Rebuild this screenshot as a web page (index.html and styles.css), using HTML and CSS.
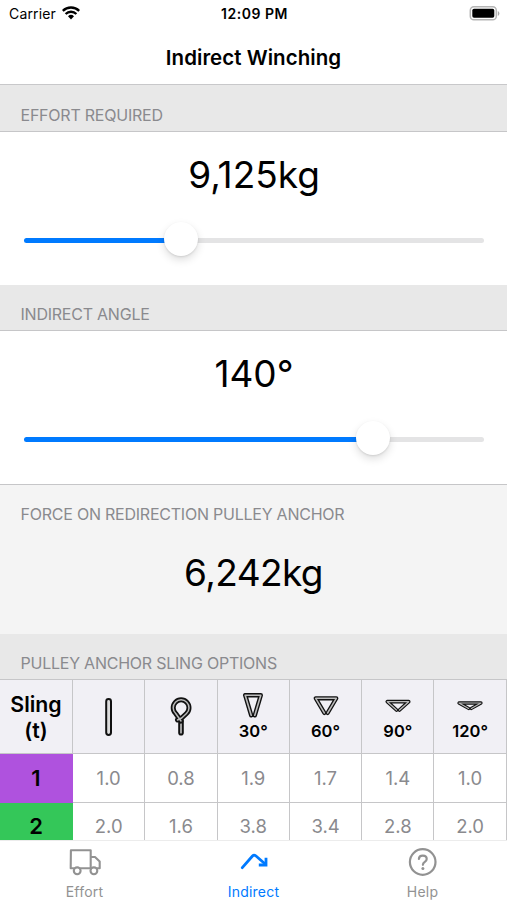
FILE: index.html
```html
<!DOCTYPE html>
<html lang="en">
<head>
<meta charset="utf-8">
<title>Indirect Winching</title>
<link rel="stylesheet" href="styles.css">
</head>
<body>
<div class="app">
  <header class="status">
    <div class="carrier"><span>Carrier</span>
      <svg width="18" height="14" viewBox="0 0 18 14"><g fill="none" stroke="#000" stroke-width="2.3"><path d="M.8 4.9A11.6 11.6 0 0 1 17.2 4.9"/><path d="M3.6 8A7.6 7.6 0 0 1 14.4 8"/></g><path d="M6 10.3A4.3 4.3 0 0 1 12 10.3L9 13.4Z"/></svg>
    </div>
    <time class="clock">12:09 PM</time>
    <svg class="battery" width="31" height="15" viewBox="0 0 31 15"><rect x="1.3" y=".8" width="26" height="13" rx="3.6" fill="#fff" stroke="#b5b5b5" stroke-width="1.5"/><rect x="3.3" y="2.8" width="22" height="9" rx="1.7"/><path d="M28.8 5v5q1.6-.8 1.6-2.5T28.8 5Z" fill="#aaa"/></svg>
  </header>
  <h1 class="title"><span>Indirect Winching</span></h1>
  <main class="content">
    <h2 class="section">EFFORT REQUIRED</h2>
    <section class="panel">
      <div class="value">9,125kg</div>
      <div class="slider"><div class="fill" style="width:157px"></div><div class="thumb"></div><div class="rest"></div></div>
    </section>
    <h2 class="section">INDIRECT ANGLE</h2>
    <section class="panel">
      <div class="value">140°</div>
      <div class="slider"><div class="fill" style="width:349px"></div><div class="thumb"></div><div class="rest"></div></div>
    </section>
    <section class="force">
      <h2 class="label">FORCE ON REDIRECTION PULLEY ANCHOR</h2>
      <div class="value result">6,242kg</div>
    </section>
    <h2 class="section">PULLEY ANCHOR SLING OPTIONS</h2>
    <div class="grid">
      <div class="cell head sling">Sling<br>(t)</div>
      <div class="cell head"><svg width="10" height="40" viewBox="0 0 10 40"><rect x="2.2" y="2" width="4.8" height="36" rx="2.4" fill="#ddd" stroke="#111" stroke-width="2"/></svg></div>
      <div class="cell head"><svg width="24" height="40" viewBox="0 0 24 40"><g fill="none" stroke-linecap="round" stroke-linejoin="round"><path d="M12 35.7V24" stroke="#111" stroke-width="5.6"/><path d="M12 35.7V24" stroke="#bbb" stroke-width="1.7"/><path d="M12 24L6.7 16.5A7.9 7.9 0 1 1 17.5 16.5L12.7 21L8.5 23" stroke="#111" stroke-width="5"/><path d="M12 24L6.7 16.5A7.9 7.9 0 1 1 17.5 16.5L12.7 21L8.5 23" stroke="#bbb" stroke-width="1.5"/></g></svg></div>
      <div class="cell head angle"><svg width="26" height="27" viewBox="0 0 26 27"><g fill="none" stroke-linejoin="round" stroke-linecap="round"><path d="M11.2 23.3L5.2 3.2H20.8L14.8 23.3" stroke="#111" stroke-width="4.4"/><path d="M11.2 23.3L5.2 3.2H20.8L14.8 23.3" stroke="#bbb" stroke-width="1.6"/></g></svg><b>30°</b></div>
      <div class="cell head angle"><svg width="28" height="27" viewBox="0 0 28 27"><g fill="none" stroke-linejoin="round" stroke-linecap="round"><path d="M12.4 21L3.7 6.3H24.3L15.6 21" stroke="#111" stroke-width="4.2"/><path d="M12.4 21L3.7 6.3H24.3L15.6 21" stroke="#bbb" stroke-width="1.5"/></g></svg><b>60°</b></div>
      <div class="cell head angle"><svg width="28" height="27" viewBox="0 0 28 27"><g fill="none" stroke-linejoin="round" stroke-linecap="round"><path d="M12.5 18L3.3 9.7H24.7L15.5 18" stroke="#111" stroke-width="3.7"/><path d="M12.5 18L3.3 9.7H24.7L15.5 18" stroke="#bbb" stroke-width="1.3"/></g></svg><b>90°</b></div>
      <div class="cell head angle"><svg width="28" height="27" viewBox="0 0 28 27"><g fill="none" stroke-linejoin="round" stroke-linecap="round"><path d="M12.6 16.4L3 11H25L15.4 16.4" stroke="#111" stroke-width="3.3"/><path d="M12.6 16.4L3 11H25L15.4 16.4" stroke="#bbb" stroke-width="1.2"/></g></svg><b>120°</b></div>
      <div class="cell size purple">1</div><div class="cell">1.0</div><div class="cell">0.8</div><div class="cell">1.9</div><div class="cell">1.7</div><div class="cell">1.4</div><div class="cell">1.0</div>
      <div class="cell size green">2</div><div class="cell">2.0</div><div class="cell">1.6</div><div class="cell">3.8</div><div class="cell">3.4</div><div class="cell">2.8</div><div class="cell">2.0</div>
    </div>
  </main>
  <nav class="tabs">
    <a class="tab"><svg width="32" height="28" viewBox="0 0 32 28"><g fill="none" stroke="#929292" stroke-width="2.1" stroke-linejoin="round"><path d="M1.9 2.2H21.7V20.2H1.7ZM21.7 9H26L30.7 13.5V20.2H21.7"/><g fill="#fff"><circle cx="8.2" cy="22.8" r="3.4"/><circle cx="24.9" cy="22.8" r="3.4"/></g></g></svg><span>Effort</span></a>
    <a class="tab active"><svg width="32" height="28" viewBox="0 0 32 28"><g fill="none" stroke="#007aff" stroke-width="2.8" stroke-linecap="round" stroke-linejoin="round"><path d="M4.3 19.7L14.5 8Q16 6.4 17.7 7.8L27.5 16.3"/><path d="M28 9.7V17H20.8" stroke-linecap="butt" stroke-linejoin="miter"/></g></svg><span>Indirect</span></a>
    <a class="tab"><svg width="32" height="28" viewBox="0 0 32 28"><g fill="none" stroke="#929292" stroke-width="2.2" stroke-linecap="round"><circle cx="15.7" cy="14" r="12.8"/><path d="M11.9 11C12.1 6.5 19.7 6.7 19.7 11C19.7 14 15.9 13.8 15.9 16.8"/></g><circle cx="15.9" cy="20.5" r="1.5" fill="#929292"/></svg><span>Help</span></a>
  </nav>
</div>
</body>
</html>
```
FILE: styles.css
```css
* { box-sizing: border-box; }
body { margin: 0; background: #fff; color: #000; font-family: Inter, "Liberation Sans", sans-serif; }
svg { display: block; flex: none; }
.app { width: 507px; height: 900px; display: flex; flex-direction: column; overflow: hidden; }
.status { height: 28px; display: grid; grid-template-columns: 1fr auto 1fr; align-items: center; padding: 0 7px 0 9px; font-size: 14px; line-height: 20px; flex: none; }
.carrier { display: flex; align-items: center; gap: 6px; letter-spacing: .15px; }
.carrier svg { margin-bottom: 2px; }
.clock { font-weight: 600; font-size: 14px; letter-spacing: .5px; }
.battery { justify-self: end; margin-bottom: 2px; }
.title { height: 57px; margin: 0; padding-top: 2px; display: flex; align-items: center; justify-content: center; border-bottom: 1px solid #c8c8ca; font-size: 20.5px; font-weight: 600; letter-spacing: .04px; flex: none; }
.content { flex: 1; min-height: 0; overflow: hidden; }
.section { height: 46px; margin: 0; padding: 19px 20.5px 0; background: #e8e8e8; border-bottom: 1px solid #c6c6c8; color: #8a8a8e; font-size: 16px; line-height: 20px; font-weight: 400; letter-spacing: -.23px; }
.section:first-child { height: 47px; padding-top: 20px; }
.panel { height: 153px; padding: 20px 23px 0 24px; }
.panel + .force { border-top: 1px solid #c6c6c8; }
.value { font-size: 37px; line-height: 46px; text-align: center; }
.slider { display: flex; align-items: center; height: 34px; margin-top: 24px; }
.fill { height: 5px; margin-top: 2px; background: #007aff; border-radius: 3px 0 0 3px; margin-right: -17px; }
.rest { flex: 1; height: 5px; margin-top: 2px; margin-left: -17px; background: #e4e4e5; border-radius: 0 3px 3px 0; }
.thumb { width: 34px; height: 34px; border-radius: 50%; background: #fff; box-shadow: 0 4px 9px rgba(0,0,0,.13), 0 1px 2px rgba(0,0,0,.1); position: relative; z-index: 1; }
.force { height: 150px; background: #f4f4f4; }
.label { margin: 0; padding: 19px 20.5px 0; color: #8a8a8e; font-size: 16px; line-height: 20px; font-weight: 400; letter-spacing: -.23px; }
.force .value { margin-top: 26px; }
.result { letter-spacing: -.6px; }
.grid { display: grid; grid-template-columns: 73px repeat(6, 72.3px); grid-template-rows: 74px 48.5px 48.5px; }
.cell { display: flex; align-items: center; justify-content: center; border-right: 1px solid #c6c6c8; border-bottom: 1px solid #c6c6c8; color: #8a8a8e; font-size: 18.5px; }
.head { background: #f1f0f5; color: #000; }
.sling { font-size: 21.3px; line-height: 26px; font-weight: 600; text-align: center; }
.angle { flex-direction: column; gap: 2px; padding-bottom: 1px; font-size: 16.5px; line-height: 20px; }
.angle b { font-weight: 600; }
.size { color: #000; font-weight: 600; font-size: 22px; border-color: transparent; }
.purple { background: #af52de; }
.green { background: #34c759; }
.tabs { height: 60px; border-top: 1px solid #ececec; display: grid; grid-template-columns: repeat(3, 1fr); background: #fff; flex: none; }
.tab { display: flex; flex-direction: column; align-items: center; padding-top: 7px; gap: 6px; color: #929292; font-size: 14px; line-height: 20px; letter-spacing: .2px; }
.active { color: #007aff; }
```
